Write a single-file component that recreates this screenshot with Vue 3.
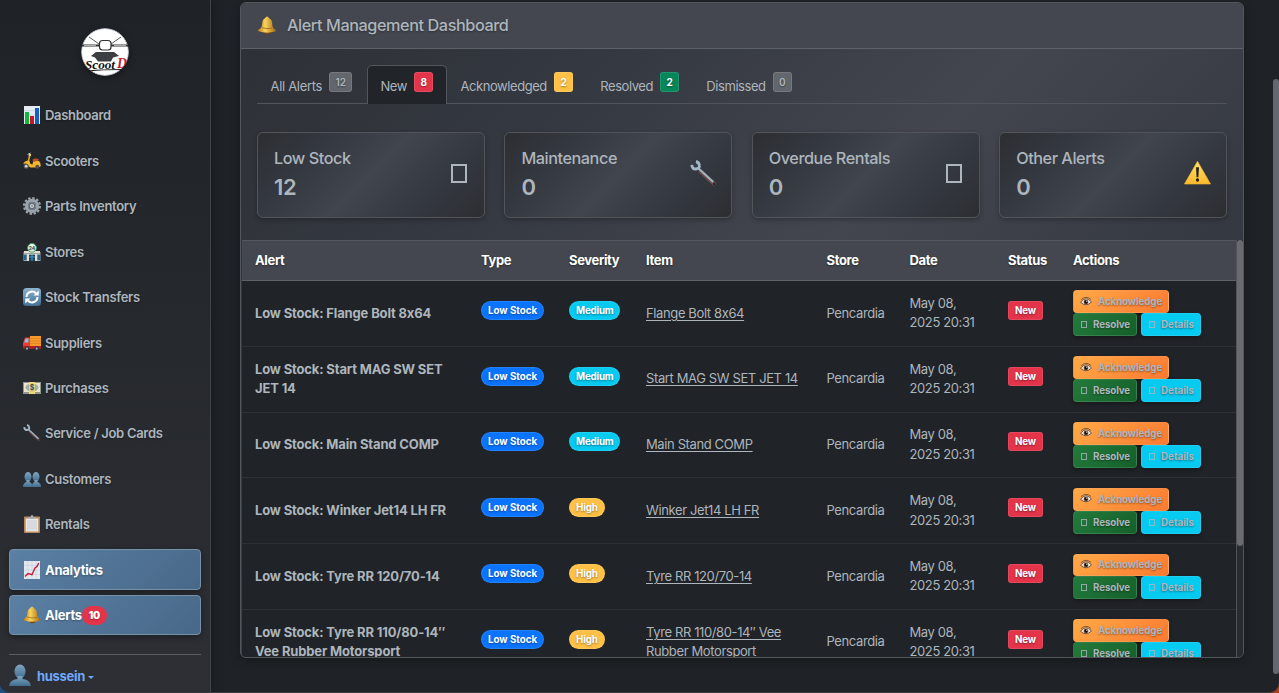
<script setup>
const nav = [
  { icon: 'chart', label: 'Dashboard' },
  { icon: 'scooter', label: 'Scooters' },
  { icon: 'gear', label: 'Parts Inventory' },
  { icon: 'store', label: 'Stores', mark: '24', markY: 6.6, markSize: 5 },
  { icon: 'cycle', label: 'Stock Transfers' },
  { icon: 'truck', label: 'Suppliers' },
  { icon: 'money', label: 'Purchases', mark: '$', markY: 11, markSize: 7 },
  { icon: 'wrench', label: 'Service / Job Cards' },
  { icon: 'people', label: 'Customers' },
  { icon: 'clip', label: 'Rentals' },
  { icon: 'trend', label: 'Analytics', active: true },
  { icon: 'bell', label: 'Alerts', active: true, count: 10 }
]
const tabs = [
  { label: 'All Alerts', count: 12, tone: 'grey' },
  { label: 'New', count: 8, tone: 'red', active: true },
  { label: 'Acknowledged', count: 2, tone: 'amber' },
  { label: 'Resolved', count: 2, tone: 'green' },
  { label: 'Dismissed', count: 0, tone: 'grey' }
]
const stats = [
  { label: 'Low Stock', value: 12, icon: '' },
  { label: 'Maintenance', value: 0, icon: 'wrench' },
  { label: 'Overdue Rentals', value: 0, icon: '' },
  { label: 'Other Alerts', value: 0, icon: 'warn' }
]
const cols = [
  ['Alert', 'c-alert'], ['Type', 'c-type'], ['Severity', 'c-sev'], ['Item', 'c-item'],
  ['Store', 'c-store'], ['Date', 'c-date'], ['Status', 'c-status'], ['Actions', 'c-act']
]
const rows = [
  { item: 'Flange Bolt 8x64', sev: 'Medium' },
  { item: 'Start MAG SW SET JET 14', sev: 'Medium' },
  { item: 'Main Stand COMP', sev: 'Medium' },
  { item: 'Winker Jet14 LH FR', sev: 'High' },
  { item: 'Tyre RR 120/70-14', sev: 'High' },
  { item: 'Tyre RR 110/80-14″ Vee Rubber Motorsport', sev: 'High' }
]
</script>

<template>
  <div class="window">
    <svg class="sprite" aria-hidden="true">
      <defs>
        <linearGradient id="gold" x1="0" x2="1"><stop offset="0" stop-color="#b87a17" /><stop offset=".4" stop-color="#f9d35c" /><stop offset="1" stop-color="#a9690d" /></linearGradient>
        <linearGradient id="steel" x1="0" y1="0" x2="0" y2="1"><stop offset="0" stop-color="#7fa6c2" /><stop offset="1" stop-color="#416d8d" /></linearGradient>
        <linearGradient id="sky" x1="0" y1="0" x2="0" y2="1"><stop offset="0" stop-color="#8db3cf" /><stop offset="1" stop-color="#416f93" /></linearGradient>
        <linearGradient id="sun" x1="0" y1="0" x2="0" y2="1"><stop offset="0" stop-color="#ffe26a" /><stop offset="1" stop-color="#fcb92c" /></linearGradient>
      </defs>
      <symbol id="chart" viewBox="0 0 18 18"><path fill="#e3ebf3" d="M1 0h16v18H1z" /><path stroke="#c2cfdb" stroke-width=".5" d="M1 4.500h16M1 9h16M1 13.500h16" /><path fill="#13b53b" d="M2 6h4v12H2z" /><path fill="#c8142c" d="M7 10h4v8H7z" /><path fill="#1460c2" d="M12 2h4v16h-4z" /></symbol>
      <symbol id="scooter" viewBox="0 0 18 18"><path fill="none" stroke="#e8ab2c" stroke-width="1.500" stroke-linecap="round" d="M6.800 2.500 5.500 9l-1.500 3" /><path fill="#f5b62b" d="M4.800 8.500 6.500 9q.5 3.500 3 3.500 0-3 2-4.500l4.500 1q2 2 1.800 5l-2 1.500H7.500Q5 14.500 4.500 12 2 10.700.3 12.300 1 9 4.800 8.500" /><circle cx="3.200" cy="14.300" r="2.500" fill="#5b5d60" /><circle cx="3.200" cy="14.300" r="1.300" fill="#d6d9dc" /><circle cx="14.300" cy="14.800" r="2" fill="#55504a" /><path fill="#b55124" d="m9.200 7.800 3-1.500 3.700 1-1 1.700-4.500.8z" /><path stroke="#bfc5ca" d="m4.500 2.500 3-1.500" /><circle cx="6.900" cy="3" r="1.200" fill="#f4d27d" /></symbol>
      <symbol id="gear" viewBox="0 0 18 18"><circle cx="9" cy="9" r="7.900" fill="none" stroke="#9ba4ad" stroke-width="2.200" stroke-dasharray="2.400 1.740" /><circle cx="9" cy="9" r="5.600" fill="none" stroke="#9ba4ad" stroke-width="3.200" /><circle cx="9" cy="9" r="3.800" fill="#606971" stroke="#798694" /><circle cx="9" cy="9" r="2" fill="#d4d9de" /><circle cx="9" cy="9" r=".8" fill="#4c535a" /></symbol>
      <symbol id="store" viewBox="0 0 18 18"><path fill="#9baaa8" d="M.5 9h17v9H.5z" /><path fill="#e4ded0" d="M1 8h16v2H1zM4 11h2v7H4zm8 0h2v7h-2z" /><path fill="#27628a" d="M1 12h2.500v5H1zm13.500 0H17v5h-2.500z" /><path fill="#174764" d="M6 12h6v6H6z" /><path stroke="#72afd1" stroke-width=".7" d="M9 12v6M6 14h6" /><circle cx="9" cy="4.800" r="4.400" fill="#edf8f1" stroke="#3f9863" /></symbol>
      <symbol id="cycle" viewBox="0 0 18 18"><rect width="18" height="18" rx="3.500" fill="url(#sky)" /><path fill="none" stroke="#fff" stroke-width="2" d="M3.500 9a5.500 5.500 0 0 1 9.500-3.700M14.500 9A5.500 5.500 0 0 1 5 12.700" /><path fill="#fff" d="M10.500 7.500h5.200V2.400zM7.500 10.500H2.300v5.100z" /></symbol>
      <symbol id="truck" viewBox="0 0 18 18"><path fill="#f69b29" d="M7 2h11v10H7z" /><path stroke="#d67c19" stroke-width=".6" d="M7 4.500h11M7 7h11M7 9.500h11" /><path fill="#ef3838" d="M0 14V9l2-5.500h5V12h11v2.500H1z" /><path fill="#7cc5df" d="m1.200 8.500 1.500-4H5.500v4z" /><path fill="#b61d25" d="M0 12h18v2.500H0z" /><circle cx="4" cy="14.500" r="2.300" fill="#32373e" /><circle cx="13.700" cy="14.500" r="2.300" fill="#32373e" /><circle cx="4" cy="14.500" r="1" fill="#b3bbc4" /><circle cx="13.700" cy="14.500" r="1" fill="#b3bbc4" /></symbol>
      <symbol id="money" viewBox="0 0 18 18"><path fill="#92988b" d="M0 3h18v12H0z" /><path fill="#e8e4cd" d="M1 4h16v9H1z" /><ellipse cx="9" cy="8.500" rx="6.500" ry="4" fill="#a9aea0" /><path fill="#f3d978" d="M6 3h6v12H6z" /><ellipse cx="9" cy="8.500" rx="2.500" ry="3.500" fill="#f3ead0" /></symbol>
      <symbol id="wrench" viewBox="0 0 18 18"><path stroke="#6e4b4b" stroke-width="2.600" stroke-linecap="round" d="m7 7.500 9 8.300" /><path stroke="#9fb3c2" stroke-width="1.400" d="m5 5 10.500 9.700" /><path fill="none" stroke="#a2b7c7" stroke-width="1.900" d="M1.200 3.200q.3 3 2.800 2.800Q6.700 5.500 6.200 3.500 6 1.500 4 1" /><circle cx="16" cy="16" r=".8" fill="#2a2528" /></symbol>
      <symbol id="people" viewBox="0 0 18 18"><g fill="url(#steel)"><ellipse cx="5" cy="6.800" rx="3.500" ry="4.800" /><path d="M3.500 10h3v2q3 1 3 5H0q0-4 3.500-5z" /><ellipse cx="13" cy="6.800" rx="3.500" ry="4.800" /><path d="M11.500 10h3v2q3.500 1 3.500 5H8.800q0-4 2.700-5z" /></g></symbol>
      <symbol id="clip" viewBox="0 0 18 18"><rect x="1" y="1.500" width="16" height="16.500" rx="1" fill="#b88a59" /><path fill="#e8e9eb" d="M2.700 3.500h12.600v13H2.700z" /><path stroke="#bdc0c5" stroke-width=".7" d="M4 6h10M4 8h10M4 10h10M4 12h10M4 14h10" /><path fill="#a4a8af" d="M5 3.600V2h2.500Q7.500 0 9 0t1.500 2H13v1.600z" /></symbol>
      <symbol id="trend" viewBox="0 0 18 18"><path fill="#e3e9ef" d="M1 0h16v18H1z" /><path stroke="#bec9d4" stroke-width=".5" d="M1 4.500h16M1 9h16M1 13.500h16M5 0v18M9 0v18M13 0v18" /><path fill="none" stroke="#c61b34" stroke-width="1.400" d="m2 15.500 3-3 4 1.200L12 7l2-1.500L15.700 2" /></symbol>
      <symbol id="bell" viewBox="0 0 18 18"><ellipse cx="9.500" cy="15.300" rx="3" ry="2" fill="#7b4910" /><path fill="url(#gold)" d="M9 .5q1.500 0 1.700 1.500Q14 3.500 14 8q0 3.700 3.300 5.300.5.800-.5 1.500Q9 17 1 14.500q-1-1-.1-1.800Q4.200 11.500 4.500 7q.3-4 3-5Q7.700.5 9 .5" /><path fill="none" stroke="#8b560c" stroke-width=".6" d="M4 11q5 1.700 10 .5" /></symbol>
      <symbol id="person" viewBox="0 0 22 22"><ellipse cx="11" cy="7.500" rx="5.500" ry="7" fill="url(#steel)" /><path fill="url(#steel)" d="M8.500 12h5v3q8 1 8.500 7H0q.500-6 8.500-7z" /></symbol>
      <symbol id="warn" viewBox="0 0 18 18"><path fill="url(#sun)" stroke="#f4b434" stroke-width=".4" stroke-linejoin="round" d="M9 1.500 17.700 16.700H.3z" /><path fill="#20201d" d="M8 5.500h2l-.4 6.700H8.400z" /><circle cx="9" cy="14" r="1.100" fill="#20201d" /></symbol>
      <symbol id="eye" viewBox="0 0 12 12"><path fill="#e9e6e2" stroke="#5d4a3c" stroke-width=".9" d="M.5 6.200Q6-.5 11.500 6 6 11.500.5 6.200" /><circle cx="6" cy="6" r="2.300" fill="#6b3f27" /><circle cx="6" cy="6" r="1.400" fill="#18100d" /><circle cx="6.800" cy="5.200" r=".6" fill="#fff" /><path fill="none" stroke="#5d4a3c" stroke-width=".8" d="M1 3.700Q6-1 11 3.500" /></symbol>
    </svg>

    <aside class="sidebar">
      <svg class="logo" viewBox="0 0 48 48">
        <circle cx="24" cy="24" r="23.500" fill="#fff" stroke="#a9adb2" />
        <path fill="none" stroke="#333" stroke-width=".8" d="m8 9 10 7M40 9l-10 7" />
        <path stroke="#333" stroke-width="2.200" d="M1 17.500h17M30 17.500h17" />
        <path stroke="#fff" stroke-width=".6" d="M3 17.500h12M33 17.500h12" />
        <rect x="18.500" y="12.500" width="11.500" height="9.500" rx="3" fill="#fff" stroke="#333" stroke-width="1.200" />
        <path fill="#3c3e41" d="m10 28 5-4h18l5 4-6 1.500-2 4H17l-3-4z" />
        <text class="script dark" x="4" y="40.500" textLength="30" lengthAdjust="spacingAndGlyphs">Scoot</text>
        <text class="script red" x="36" y="39.500" textLength="10" lengthAdjust="spacingAndGlyphs">D</text>
        <path fill="none" stroke="#111" stroke-width="1.100" d="M8 43q12-1.500 34-1.500" />
      </svg>
      <nav class="nav">
        <a v-for="n in nav" :key="n.label" class="nav-item" :class="{ active: n.active }">
          <svg class="ico" viewBox="0 0 18 18">
            <use :href="'#' + n.icon" width="18" height="18" />
            <text v-if="n.mark" class="mark" x="9" :y="n.markY" :font-size="n.markSize" text-anchor="middle">{{ n.mark }}</text>
          </svg>
          <span>{{ n.label }}</span>
          <b v-if="n.count" class="count">{{ n.count }}</b>
        </a>
      </nav>
      <div class="user">
        <svg class="avatar"><use href="#person" /></svg>
        <span>hussein</span>
        <i class="caret"></i>
      </div>
    </aside>

    <main class="main">
      <section class="card">
        <header class="card-head">
          <svg class="head-ico"><use href="#bell" /></svg>
          <h1>Alert Management Dashboard</h1>
        </header>
        <div class="tabs">
          <a v-for="t in tabs" :key="t.label" class="tab" :class="{ active: t.active }">
            <span>{{ t.label }}</span><b class="tab-count" :class="t.tone">{{ t.count }}</b>
          </a>
        </div>
        <div class="stats">
          <div v-for="s in stats" :key="s.label" class="stat">
            <div>
              <div class="stat-label">{{ s.label }}</div>
              <div class="stat-value">{{ s.value }}</div>
            </div>
            <svg v-if="s.icon" class="stat-ico" :class="s.icon"><use :href="'#' + s.icon" /></svg>
            <i v-else class="glyph big"></i>
          </div>
        </div>
        <div class="table-wrap">
          <table>
            <colgroup><col v-for="c in cols" :key="c[0]" :class="c[1]" /></colgroup>
            <thead><tr><th v-for="c in cols" :key="c[0]">{{ c[0] }}</th></tr></thead>
            <tbody>
              <tr v-for="r in rows" :key="r.item">
                <td class="strong">Low Stock: {{ r.item }}</td>
                <td><span class="pill blue">Low Stock</span></td>
                <td><span class="pill" :class="r.sev === 'High' ? 'amber' : 'cyan'">{{ r.sev }}</span></td>
                <td class="item"><u>{{ r.item }}</u></td>
                <td>Pencardia</td>
                <td class="date">May 08,<br />2025 20:31</td>
                <td><span class="pill red square">New</span></td>
                <td>
                  <div class="actions">
                    <button class="btn orange"><svg class="eye"><use href="#eye" /></svg>Acknowledge</button>
                    <button class="btn forest"><i class="glyph"></i>Resolve</button>
                    <button class="btn cyan"><i class="glyph"></i>Details</button>
                  </div>
                </td>
              </tr>
            </tbody>
          </table>
          <div class="track"><div class="thumb"></div></div>
        </div>
      </section>
    </main>
    <div class="page-track"><div class="page-thumb"></div></div>
  </div>
</template>

<style>
html { background: linear-gradient(90deg, #1d4f80 50%, #a8401c 50%); }
body { overflow: hidden; }
</style>

<style scoped>
* { box-sizing: border-box; }
.window {
  display: flex;
  width: 1279px;
  height: 693px;
  overflow: hidden;
  background: #1f2327;
  border-bottom: 1px solid #363a3f;
  border-radius: 0 0 10px 10px;
  color: #adb5bd;
  font-family: Inter, "Liberation Sans", sans-serif;
  font-size: 13px;
  letter-spacing: -0.38px;
}
.sprite { position: absolute; width: 0; height: 0; }
.sidebar {
  display: flex;
  flex-direction: column;
  flex: none;
  width: 211px;
  padding: 28px 9px 0;
  background: linear-gradient(180deg, #1f2327, #2d2f34);
  border-right: 1px solid #41454a;
  box-shadow: 2px 0 8px rgba(0, 0, 0, 0.25);
}
.logo { align-self: center; flex: none; width: 48px; height: 48px; margin-bottom: 19.100px; border-radius: 50%; box-shadow: 0 2px 6px rgba(0, 0, 0, 0.4); }
.script { font-family: "Liberation Serif", serif; font-style: italic; font-weight: 700; font-size: 13px; letter-spacing: 0; }
.dark { fill: #111; }
.script.red { fill: #c01f35; font-size: 15px; }
.mark { fill: #3b5244; font-weight: 700; letter-spacing: 0; }
.nav { display: flex; flex-direction: column; flex: none; gap: 5px; }
.nav-item {
  display: flex;
  align-items: center;
  height: 40.450px;
  padding: 0 13px;
  border: 1px solid transparent;
  border-radius: 4px;
  font-weight: 600;
  letter-spacing: -0.3px;
  text-shadow: 0 1px 2px rgba(0, 0, 0, 0.3);
}
.nav-item.active {
  color: #fff;
  font-weight: 700;
  letter-spacing: -0.28px;
  background: linear-gradient(135deg, #5a80a4, #486888);
  border-color: #7592ad;
  box-shadow: 0 2px 6px rgba(0, 0, 0, 0.35);
}
.ico { width: 18px; height: 18px; margin-right: 4px; flex: none; }
.count {
  display: grid;
  place-items: center;
  width: 25px;
  height: 19px;
  border-radius: 10px;
  background: #e3344a;
  font-size: 10px;
}
.user {
  display: flex;
  align-items: center;
  flex: none;
  height: 44px;
  margin-top: 18.200px;
  border-top: 1px solid #5a5d61;
  color: #6ea8fe;
  font-weight: 700;
  letter-spacing: -0.3px;
}
.avatar { width: 22px; height: 22px; margin: -2px 6px 0 0; }
.caret { margin: 2px 0 0 3px; border: 3px solid transparent; border-top-color: #6ea8fe; border-bottom: 0; }
.main { flex: 1; padding: 2px 0 0 29px; }
.card {
  display: flex;
  flex-direction: column;
  width: 1004px;
  height: 656px;
  overflow: hidden;
  border: 1px solid #53575d;
  border-radius: 6px;
  background: linear-gradient(135deg, #2d3035 0%, #343840 25%, #43464e 50%, #343840 75%, #2d3035 100%);
  box-shadow: 0 3px 10px rgba(0, 0, 0, 0.3);
}
.card-head {
  display: flex;
  align-items: center;
  flex: none;
  height: 46px;
  padding: 0 0 1px 16px;
  border-bottom: 1px solid #5d6168;
  background: #44474f;
}
.head-ico { width: 20px; height: 19px; margin-right: 10px; }
h1 { margin: 0; font-size: 16.250px; font-weight: 500; letter-spacing: -0.43px; text-shadow: 0 1px 2px rgba(0, 0, 0, 0.35); }
.tabs { display: flex; flex: none; height: 39px; margin: 16px 16px 0; border-bottom: 1px solid #51555b; }
.tab {
  display: flex;
  align-items: flex-start;
  height: 39px;
  padding: 0 12.600px;
  border: 1px solid transparent;
  border-bottom: 0;
  border-radius: 5px 5px 0 0;
}
.tab span { margin-top: 12px; line-height: 17px; letter-spacing: -0.44px; }
.tab:first-child { padding-right: 13.600px; }
.tab:first-child span { letter-spacing: -0.33px; }
.tab.active { background: #212429; border-color: #53575d; }
.tab-count {
  margin: 6px 0 0 7px;
  padding: 0 5.500px;
  border: 1px solid rgba(255, 255, 255, 0.12);
  border-radius: 3px;
  font-size: 10px;
  line-height: 18px;
  letter-spacing: -0.1px;
  color: #fff;
  text-shadow: 0 1px 2px rgba(0, 0, 0, 0.4);
}
.tab-count.grey { background: #62666d; color: #adb5bd; font-weight: 600; }
.red { background: #e3344a; }
.amber { background: #ffc145; }
.green { background: #05875a; }
.stats { display: grid; grid-template-columns: repeat(4, 1fr); gap: 19.500px; flex: none; height: 86px; margin: 28px 16px 22px; }
.stat {
  display: flex;
  justify-content: space-between;
  align-items: center;
  padding: 0 15px 2px 16px;
  border: 1px solid #515459;
  border-radius: 6px;
  background: linear-gradient(135deg, #2c2e32 0%, #343840 25%, #41454d 50%, #343840 75%, #2c2e32 100%);
  box-shadow: 0 2px 5px rgba(0, 0, 0, 0.25);
}
.stat-label { font-size: 16.250px; font-weight: 500; line-height: 20px; letter-spacing: -0.45px; }
.stat-value { margin-top: 6px; font-size: 22px; font-weight: 600; line-height: 26px; }
.stat-ico { width: 27px; height: 27px; margin-bottom: 4px; }
.stat-ico.wrench { margin: 0 -1px 2px 0; }
.glyph { display: block; flex: none; width: 6px; height: 7px; border: 1px solid currentColor; opacity: 0.8; }
.glyph.big { width: 16px; height: 19px; margin: 0 2px 2px 0; border-width: 2px; opacity: 1; }
.table-wrap { display: flex; flex: 1; min-height: 0; padding-left: 1px; overflow: hidden; }
table { flex: none; align-self: flex-start; width: 994px; table-layout: fixed; border-collapse: separate; border-spacing: 0; background: #202327; }
.c-alert { width: 226px; }
.c-type { width: 88px; }
.c-sev { width: 77px; }
.c-item { width: 180.500px; }
.c-store { width: 83px; }
.c-date { width: 98.500px; }
.c-status { width: 65px; }
.c-act { width: 176px; }
th {
  height: 41px;
  padding: 0 0 1px 13px;
  text-align: left;
  color: #fff;
  font-weight: 700;
  letter-spacing: -0.36px;
  background: #44474f;
  border-top: 1px solid #53575d;
  border-bottom: 1px solid #5d6168;
  text-shadow: 0 1px 2px rgba(0, 0, 0, 0.45);
}
td { height: 65.770px; padding: 0 12px 0 13px; line-height: 19.500px; border-bottom: 1px solid #2d3035; vertical-align: middle; }
td.date { padding-right: 0; }
.strong { font-weight: 700; letter-spacing: -0.15px; }
.item u { text-underline-offset: 2px; text-decoration-thickness: 1px; }
.pill {
  display: block;
  width: fit-content;
  margin-bottom: 6px;
  padding: 0 6px;
  border: 1px solid rgba(255, 255, 255, 0.1);
  border-radius: 10px;
  color: #fff;
  font-size: 9.750px;
  font-weight: 700;
  line-height: 17px;
  letter-spacing: -0.2px;
  white-space: nowrap;
  text-shadow: 0 1px 2px rgba(0, 0, 0, 0.4);
}
.pill.square { border-radius: 3px; }
.pill.blue { letter-spacing: 0; }
.pill.amber { letter-spacing: -0.1px; }
.blue { background: #0a74ff; }
.cyan { background: #06caf0; }
.actions { display: flex; flex-wrap: wrap; column-gap: 4px; width: 132px; }
.btn {
  display: flex;
  align-items: center;
  height: 22.900px;
  padding: 0 6px;
  border: 1px solid rgba(255, 255, 255, 0.1);
  border-radius: 4px;
  color: #adb5bd;
  font-family: inherit;
  font-size: 9.750px;
  font-weight: 700;
  letter-spacing: -0.1px;
  text-shadow: 0 1px 2px rgba(0, 0, 0, 0.4);
  box-shadow: 0 2px 4px rgba(0, 0, 0, 0.3);
}
.btn.cyan { letter-spacing: 0; }
.btn .glyph { margin: 0 6px 0 1px; }
.eye { width: 12px; height: 12px; margin-right: 6px; }
.orange { background: linear-gradient(135deg, #ffa946, #fb7a31); }
.forest { background: linear-gradient(135deg, #237a3c, #15602a); }
.track { flex: none; width: 7px; background: #282b30; border-left: 1px solid #505359; }
.thumb { height: 306px; border-radius: 3px; background: #696b70; }
.page-track { flex: none; width: 6px; padding-top: 79px; }
.page-thumb { height: 595px; border-radius: 3px; background: #65676f; }
</style>
